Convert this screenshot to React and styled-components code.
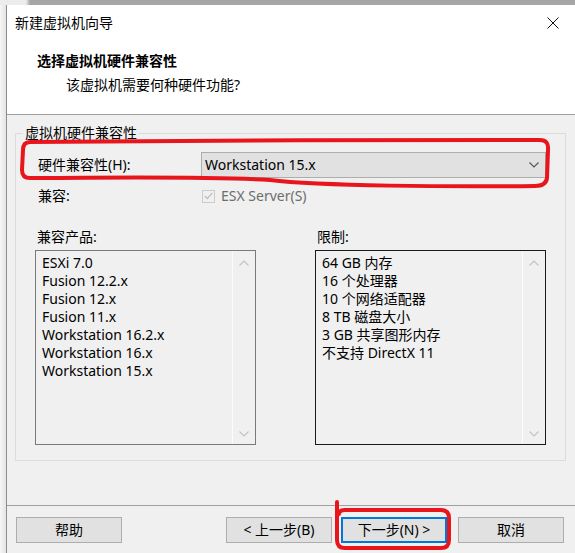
import React from 'react';
import styled, { createGlobalStyle } from 'styled-components';

const GlobalStyle = createGlobalStyle`
  html, body {
    margin: 0;
    padding: 0;
    background: #f2f2f2;
  }
  body {
    font-family: "Noto Sans", "Noto Sans CJK SC", sans-serif;
    font-size: 14px;
    color: #000;
  }
`;

const Screen = styled.div`
  position: relative;
  width: 575px;
  height: 553px;
  overflow: hidden;
  background: #f2f2f2;
`;

const TopEdge = styled.div`
  height: 5px;
  background: linear-gradient(90deg, #ececec 0, #ececec 26px, #a6a6a6 30px, #a6a6a6 100%);
`;

const Desk = styled.div`
  display: flex;
  height: 548px;
`;

const Gutter = styled.div`
  flex: 0 0 6px;
  background: linear-gradient(90deg, #f6f6f6, #e4e4e4);
`;

const Window = styled.div`
  flex: 1;
  min-width: 0;
  display: flex;
  flex-direction: column;
  border-left: 1px solid #8c8c8c;
  background: #f0f0f0;
`;

const TitleBar = styled.div`
  height: 35px;
  flex-shrink: 0;
  display: flex;
  align-items: center;
  justify-content: space-between;
  padding: 0 16px 0 8px;
  background: #fff;
  line-height: 18px;
`;

const CloseButton = styled.div`
  width: 12px;
  height: 12px;
  display: flex;
`;

const Header = styled.div`
  height: 75px;
  flex-shrink: 0;
  box-sizing: border-box;
  padding: 11px 0 0 30px;
  background: #fff;
  border-bottom: 1px solid #a0a0a0;
`;

const Heading = styled.div`
  font-weight: bold;
  line-height: 20px;
`;

const SubHeading = styled.div`
  line-height: 20px;
  margin: 4px 0 0 29px;
`;

const Body = styled.div`
  height: 391px;
  flex-shrink: 0;
  padding: 9px 0 0 8px;
  box-sizing: border-box;
  border-bottom: 1px solid #a0a0a0;
`;

const Group = styled.fieldset`
  width: 551px;
  height: 337px;
  box-sizing: border-box;
  margin: 0;
  padding: 0;
  border: 1px solid #dcdcdc;
`;

const Legend = styled.legend`
  margin-left: 7px;
  padding: 0 2px;
  line-height: 18px;
`;

const Row = styled.div`
  display: grid;
  grid-template-columns: ${p => p.$cols};
  align-items: center;
  margin-top: ${p => p.$top}px;
  padding-left: ${p => p.$left}px;
  line-height: 18px;
`;

const Select = styled.div`
  height: 26px;
  box-sizing: border-box;
  display: flex;
  align-items: center;
  justify-content: space-between;
  padding: 0 6px 0 3px;
  background: #e1e1e1;
  border: 1px solid #adadad;
`;

const CheckRow = styled.div`
  display: flex;
  align-items: center;
  gap: 6px;
  color: #6d6d6d;
`;

const CheckBox = styled.div`
  width: 13px;
  height: 13px;
  box-sizing: border-box;
  border: 1px solid #cccccc;
  background: #f0f0f0;
  display: flex;
  align-items: center;
  justify-content: center;
  margin-left: 1px;
`;

const Columns = styled.div`
  display: grid;
  grid-template-columns: 221px 231px;
  column-gap: 59px;
  padding-left: 19px;
  margin-top: 23px;
`;

const Column = styled.div`
  display: flex;
  flex-direction: column;
  gap: 4px;
  line-height: 18px;
`;

const ColumnLabel = styled.div`
  padding-left: 2px;
`;

const ListBox = styled.div`
  height: 195px;
  box-sizing: border-box;
  display: flex;
  border: 1px solid ${p => (p.$focused ? '#1a1a1a' : '#7a7a7a')};
  background: #f0f0f0;
`;

const Items = styled.div`
  flex: 1;
  padding: 3px 6px;
  line-height: 18px;
  white-space: nowrap;
`;

const ScrollTrack = styled.div`
  width: 22px;
  display: flex;
  flex-direction: column;
  justify-content: space-between;
  align-items: center;
  padding: 9px 0 7px;
  border-left: 1px solid #fbfbfb;
`;

const Footer = styled.div`
  display: flex;
  align-items: center;
  padding: 11px 0 0 9px;
`;

const Button = styled.div`
  flex: 0 0 106px;
  height: 26px;
  box-sizing: border-box;
  display: flex;
  align-items: center;
  justify-content: center;
  background: #e1e1e1;
  border: 1px solid ${p => (p.$primary ? '#0078d7' : '#adadad')};
  box-shadow: ${p => (p.$primary ? 'inset 0 0 0 1px #0078d7' : 'none')};
  margin-left: ${p => p.$gap || 0}px;
  line-height: 18px;
  white-space: nowrap;
`;

const Marks = styled.svg`
  position: absolute;
  left: 0;
  top: 0;
  pointer-events: none;
`;

const Chevron = ({ up, color = '#c2c2c2' }) => (
  <svg width="10" height="6" viewBox="0 0 10 6">
    <path
      d={up ? 'M0.5 5.5 L5 1 L9.5 5.5' : 'M0.5 0.5 L5 5 L9.5 0.5'}
      fill="none"
      stroke={color}
      strokeWidth="1.1"
    />
  </svg>
);

const products = [
  'ESXi 7.0',
  'Fusion 12.2.x',
  'Fusion 12.x',
  'Fusion 11.x',
  'Workstation 16.2.x',
  'Workstation 16.x',
  'Workstation 15.x',
];

const limits = [
  '64 GB 内存',
  '16 个处理器',
  '10 个网络适配器',
  '8 TB 磁盘大小',
  '3 GB 共享图形内存',
  '不支持 DirectX 11',
];

function List({ items, focused }) {
  return (
    <ListBox $focused={focused}>
      <Items>
        {items.map(item => (
          <div key={item}>{item}</div>
        ))}
      </Items>
      <ScrollTrack>
        <Chevron up />
        <Chevron />
      </ScrollTrack>
    </ListBox>
  );
}

export default function App() {
  return (
    <Screen>
      <GlobalStyle />
      <TopEdge />
      <Desk>
        <Gutter />
        <Window>
          <TitleBar>
            <span>新建虚拟机向导</span>
            <CloseButton>
              <svg width="12" height="12" viewBox="0 0 12 12">
                <path d="M0.5 0.5 L11.5 11.5 M11.5 0.5 L0.5 11.5" stroke="#111" strokeWidth="1" />
              </svg>
            </CloseButton>
          </TitleBar>
          <Header>
            <Heading>选择虚拟机硬件兼容性</Heading>
            <SubHeading>该虚拟机需要何种硬件功能?</SubHeading>
          </Header>
          <Body>
            <Group>
              <Legend>虚拟机硬件兼容性</Legend>
              <Row $cols="163px 345px" $top={10} $left={22}>
                <span>硬件兼容性(H):</span>
                <Select>
                  <span>Workstation 15.x</span>
                  <Chevron color="#555" />
                </Select>
              </Row>
              <Row $cols="163px auto" $top={9} $left={22}>
                <span>兼容:</span>
                <CheckRow>
                  <CheckBox>
                    <svg width="9" height="8" viewBox="0 0 9 8">
                      <path d="M0.8 4 L3.3 6.6 L8.3 0.8" fill="none" stroke="#bdbdbd" strokeWidth="1.3" />
                    </svg>
                  </CheckBox>
                  <span>ESX Server(S)</span>
                </CheckRow>
              </Row>
              <Columns>
                <Column>
                  <ColumnLabel>兼容产品:</ColumnLabel>
                  <List items={products} />
                </Column>
                <Column>
                  <ColumnLabel>限制:</ColumnLabel>
                  <List items={limits} focused />
                </Column>
              </Columns>
            </Group>
          </Body>
          <Footer>
            <Button>帮助</Button>
            <Button $gap={104}>&lt; 上一步(B)</Button>
            <Button $gap={9} $primary>下一步(N) &gt;</Button>
            <Button $gap={11}>取消</Button>
          </Footer>
        </Window>
      </Desk>
      <Marks width="575" height="553" viewBox="0 0 575 553">
        <path
          d="M30 142 C150 141 400 139 540 140 Q549 140 548 150 L547 178 Q546 186 535 186 C450 187 320 186 270 180 C200 176 100 178 30 178 Q22 178 22 170 L23 150 Q23 142 30 142 Z"
          fill="none"
          stroke="#e8161c"
          strokeWidth="4"
          strokeLinejoin="round"
        />
        <path
          d="M337 502 L337 540 Q337 548 345 548 L441 548 Q449 548 449 540 L449 518 Q449 510 441 510 L345 510 Q339 510 339 514"
          fill="none"
          stroke="#e8161c"
          strokeWidth="4"
          strokeLinecap="round"
          strokeLinejoin="round"
        />
      </Marks>
    </Screen>
  );
}
